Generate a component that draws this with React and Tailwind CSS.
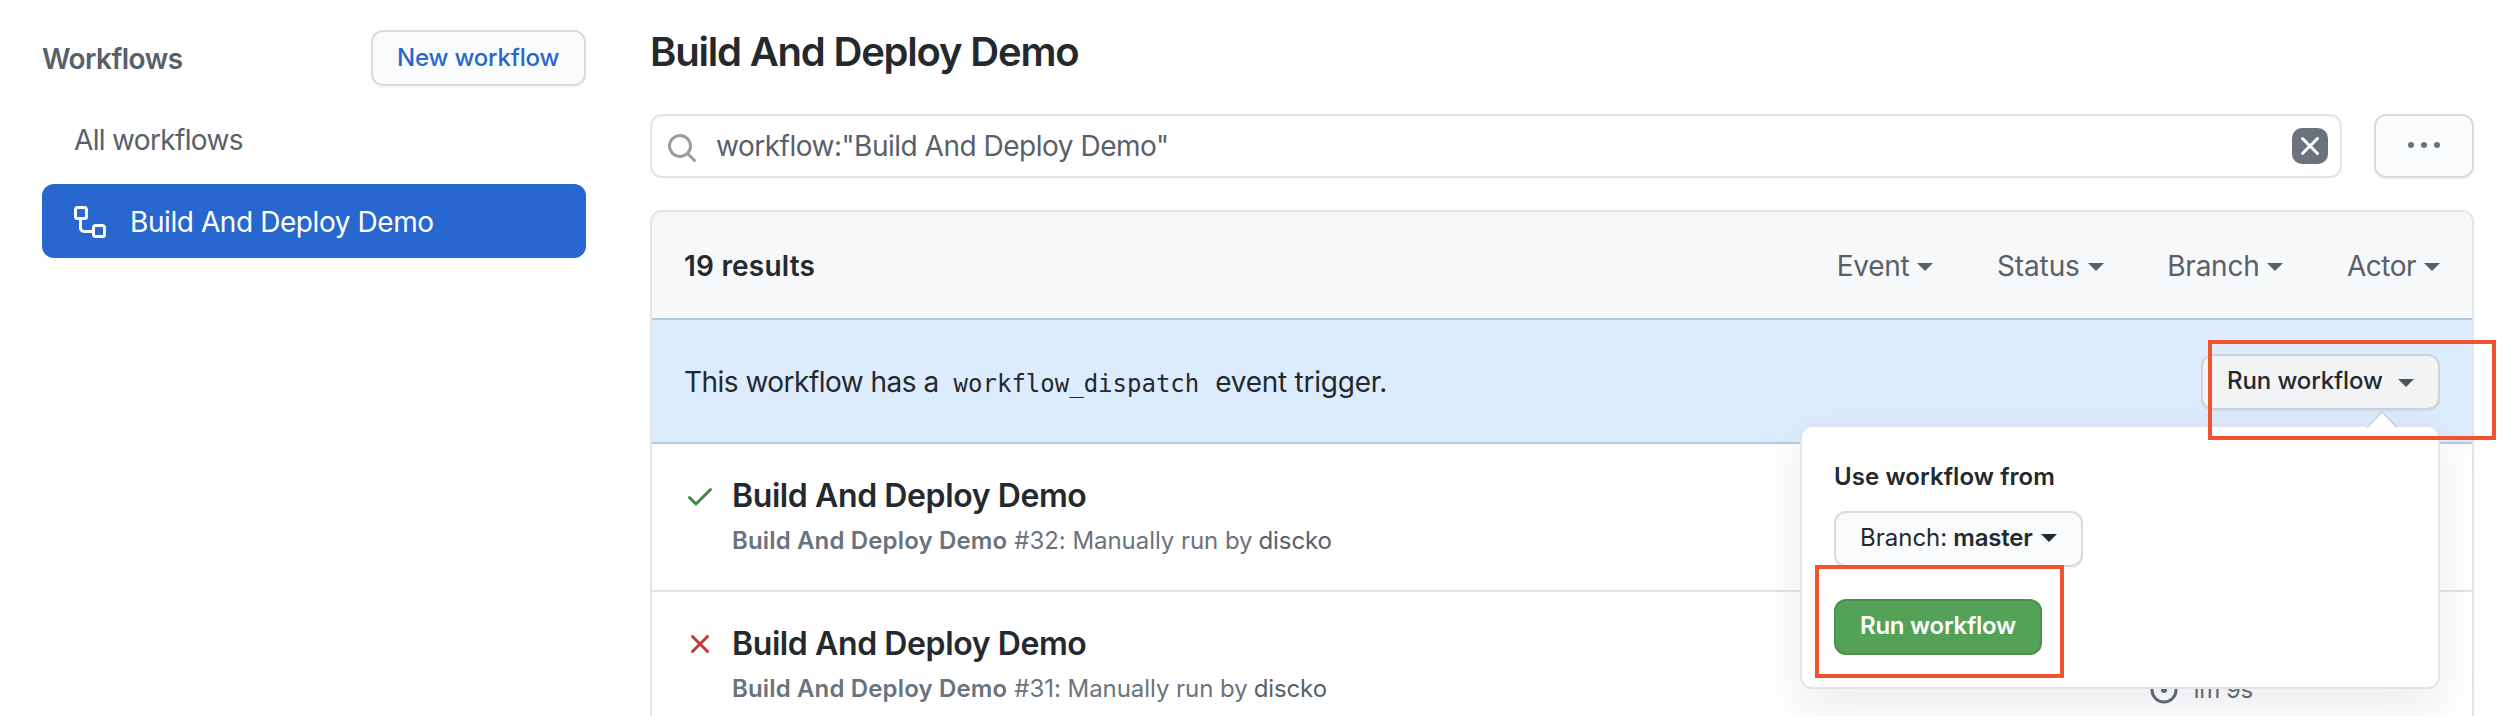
import React from "react";

const WORKFLOW =
  "M0 1.75C0 .784.784 0 1.75 0h3.5C6.216 0 7 .784 7 1.75v3.5A1.75 1.75 0 0 1 5.25 7H4v4a1 1 0 0 0 1 1h4v-1.25C9 9.784 9.784 9 10.75 9h3.5c.966 0 1.75.784 1.75 1.75v3.5A1.75 1.75 0 0 1 14.25 16h-3.5A1.75 1.75 0 0 1 9 14.25v-.75H5A2.5 2.5 0 0 1 2.5 11V7h-.75A1.75 1.75 0 0 1 0 5.25Zm1.75-.25a.25.25 0 0 0-.25.25v3.5c0 .138.112.25.25.25h3.5a.25.25 0 0 0 .25-.25v-3.5a.25.25 0 0 0-.25-.25Zm9 9a.25.25 0 0 0-.25.25v3.5c0 .138.112.25.25.25h3.5a.25.25 0 0 0 .25-.25v-3.5a.25.25 0 0 0-.25-.25Z";
const CHECK =
  "M13.78 4.22a.75.75 0 0 1 0 1.06l-7.25 7.25a.75.75 0 0 1-1.06 0L2.22 9.28a.75.75 0 0 1 1.06-1.06L6 10.94l6.72-6.72a.75.75 0 0 1 1.06 0Z";
const CROSS =
  "M3.72 3.72a.75.75 0 0 1 1.06 0L8 6.94l3.22-3.22a.75.75 0 1 1 1.06 1.06L9.06 8l3.22 3.22a.75.75 0 1 1-1.06 1.06L8 9.06l-3.22 3.22a.75.75 0 0 1-1.06-1.06L6.94 8 3.72 4.78a.75.75 0 0 1 0-1.06Z";
const SEARCH =
  "M11.5 7a4.499 4.499 0 1 1-8.998 0A4.499 4.499 0 0 1 11.5 7Zm-.82 4.74a6 6 0 1 1 1.06-1.06l3.04 3.04a.75.75 0 1 1-1.06 1.06l-3.04-3.04Z";

function Icon({ d, className = "" }) {
  return (
    <svg viewBox="0 0 16 16" fill="currentColor" className={"size-8 shrink-0 " + className}>
      <path fillRule="evenodd" d={d} />
    </svg>
  );
}

function Caret({ className = "" }) {
  return (
    <svg viewBox="0 0 16 8" fill="currentColor" className={"h-2 w-4 shrink-0 " + className}>
      <path d="M0 0h16L8 8Z" />
    </svg>
  );
}

const filters = [
  { label: "Event", tracking: "tracking-[-0.3px]" },
  { label: "Status", tracking: "tracking-[-0.1px]" },
  { label: "Branch", tracking: "tracking-[-0.25px]" },
  { label: "Actor", tracking: "tracking-[-0.5px]" },
];

function Sidebar() {
  return (
    <aside className="w-[544px] shrink-0 pt-[30px]">
      <div className="flex h-14 items-center justify-between">
        <h3 className="pt-0.5 text-[28px] leading-9 font-semibold tracking-[-0.55px] text-[#586069]">
          Workflows
        </h3>
        <button className="flex h-14 w-[215px] items-center rounded-xl border-2 border-[#d9dbdd] bg-[#fafbfc] pl-6 text-2xl leading-9 font-medium tracking-[-0.18px] text-[#2867cf] shadow-[0_2px_0_rgba(27,31,35,0.04)]">
          New workflow
        </button>
      </div>
      <div className="mt-8 pl-8 text-[28px] leading-[44px] tracking-[-0.66px] text-[#586069]">
        All workflows
      </div>
      <div className="mt-[22px] flex h-[74px] items-center rounded-xl bg-[#2867cf] pl-8 text-white">
        <Icon d={WORKFLOW} className="mt-0.5" />
        <span className="ml-6 pt-px text-[28px] leading-9 tracking-[-0.42px]">Build And Deploy Demo</span>
      </div>
    </aside>
  );
}

function RunPopover() {
  return (
    <div className="absolute top-[72px] right-0 z-10 h-[264px] w-[640px] rounded-xl border-2 border-[#e1e4e8] bg-white pt-8 pl-8 shadow-[0_16px_48px_rgba(149,157,165,0.2)]">
      <svg viewBox="0 0 32 18" className="absolute -top-4 right-[40px] h-[18px] w-8">
        <path d="M0 18 16 1l16 17Z" fill="#fff" />
        <path d="M1 16.5 16 1l15 15.5" fill="none" stroke="#c3d1e1" strokeWidth="1.5" />
      </svg>
      <div className="text-2xl leading-9 font-semibold tracking-[0.08px]">Use workflow from</div>
      <button className="mt-4 flex h-14 w-[249px] items-center rounded-xl border-2 border-[#d9dbdd] bg-[#fafbfc] pb-px pl-6 text-2xl leading-9 shadow-[0_2px_0_rgba(27,31,35,0.04)]">
        <span>Branch:</span>
        <span className="ml-1.5 font-semibold tracking-[-0.2px]">master</span>
        <Caret className="ml-2" />
      </button>
      <button className="mt-8 flex h-14 w-[208px] items-center rounded-xl border-2 border-[#4a914e] bg-[#54a158] pb-px pl-6 text-2xl leading-9 font-semibold tracking-[-0.26px] text-white">
        Run workflow
      </button>
    </div>
  );
}

function Run({ ok, number, duration }) {
  return (
    <div className="flex h-[148px] shrink-0 items-start border-b-2 border-[#e1e4e8] pt-7 pl-8">
      <Icon d={ok ? CHECK : CROSS} className={ok ? "mt-2 text-[#3f8a42]" : "mt-2 text-[#c23a36]"} />
      <div className="ml-4 w-[1416px]">
        <div className="text-[32px] leading-[48px] font-semibold tracking-[-0.4px]">Build And Deploy Demo</div>
        <div className="mt-[3px] flex text-2xl leading-9 text-[#6a737d]">
          <span className="font-semibold tracking-[0.15px]">Build And Deploy Demo</span>
          <span className="ml-[7px] tracking-[-0.05px]">#{number}: Manually run by</span>
          <span className="ml-1.5 tracking-[-0.1px] text-[#586069]">discko</span>
        </div>
      </div>
      {duration && (
        <div className="mt-[52px] flex h-9 items-center text-2xl leading-9 text-[#586069]">
          <svg viewBox="0 0 32 32" fill="none" className="size-8">
            <circle cx="16" cy="16" r="12" stroke="currentColor" strokeWidth="3" />
            <circle cx="16" cy="16" r="3" fill="currentColor" />
          </svg>
          <span className="ml-2.5 whitespace-nowrap tracking-[-0.5px]">{duration}</span>
        </div>
      )}
    </div>
  );
}

export default function App() {
  return (
    <div className="relative flex h-[716px] w-[2498px] gap-16 overflow-hidden bg-white pr-6 pl-[42px] font-['Inter',sans-serif] text-[#24292e]">
      <Sidebar />
      <main className="flex w-[1824px] shrink-0 flex-col pt-[22px]">
        <h1 className="text-[40px] leading-[60px] font-semibold tracking-[-1.2px]">Build And Deploy Demo</h1>
        <div className="mt-8 flex gap-8">
          <div className="flex h-16 w-[1692px] items-center rounded-xl border-2 border-[#e1e4e8] pl-3.5 shadow-[inset_0_2px_0_rgba(225,228,232,0.2)]">
            <Icon d={SEARCH} className="mt-1 text-[#959da5]" />
            <span className="ml-[18px] flex-1 text-[28px] leading-9 tracking-[-0.49px] text-[#586069]">
              workflow:"Build And Deploy Demo"
            </span>
            <button className="mr-3 flex size-9 items-center justify-center rounded-[10px] bg-[#6a737d] text-white">
              <Icon d={CROSS} />
            </button>
          </div>
          <button className="flex h-16 w-[100px] items-center justify-center rounded-xl border-2 border-[#d9dbdd] bg-[#fafbfc] shadow-[0_2px_0_rgba(27,31,35,0.04)]">
            <svg viewBox="0 0 32 32" fill="#6a737d" className="-mt-0.5 size-8">
              <circle cx="3" cy="16" r="3" />
              <circle cx="16" cy="16" r="3" />
              <circle cx="29" cy="16" r="3" />
            </svg>
          </button>
        </div>

        <section className="mt-8 flex h-[700px] shrink-0 flex-col rounded-t-xl border-2 border-[#e1e4e8]">
          <div className="flex h-[106px] shrink-0 items-center justify-between rounded-t-[10px] bg-[#f6f8fa] px-8 pt-px text-[28px] leading-9">
            <span className="font-semibold tracking-[0.2px]">19 results</span>
            <div className="flex gap-[63.5px] text-[#586069]">
              {filters.map((f) => (
                <div key={f.label} className="flex items-center">
                  <span className={f.tracking}>{f.label}</span>
                  <Caret className="mt-[3px] ml-2" />
                </div>
              ))}
            </div>
          </div>
          <div className="flex h-[126px] shrink-0 items-center justify-between border-y-2 border-[#b4c9e6] bg-[#dcecfd] px-8 text-[28px] leading-9">
            <div className="flex items-baseline pt-px">
              <span className="tracking-[-0.52px]">This workflow has a</span>
              <code className="ml-[15px] font-['DejaVu_Sans_Mono',monospace] text-2xl">workflow_dispatch</code>
              <span className="ml-4 tracking-[-0.25px]">event trigger.</span>
            </div>
            <div className="relative pt-px">
              <button className="flex h-14 w-[239px] items-center justify-between rounded-xl border-2 border-[#d0d3d6] bg-[#f3f4f6] pr-6 pb-0.5 pl-6 text-2xl leading-9 font-medium tracking-[-0.1px] shadow-[0_2px_0_rgba(27,31,35,0.04)]">
                Run workflow
                <Caret className="mt-1 text-[#4f5459]" />
              </button>
              <RunPopover />
            </div>
          </div>
          <Run ok number={32} />
          <Run number={31} duration="1m 9s" />
        </section>
      </main>

      {/* highlight frames over the two buttons */}
      <div className="absolute top-[340px] left-[2208px] z-20 h-[100px] w-[288px] border-4 border-[#f0532d]" />
      <div className="absolute top-[565px] left-[1815px] z-20 h-[113px] w-[249px] border-4 border-[#f0532d]" />
    </div>
  );
}
